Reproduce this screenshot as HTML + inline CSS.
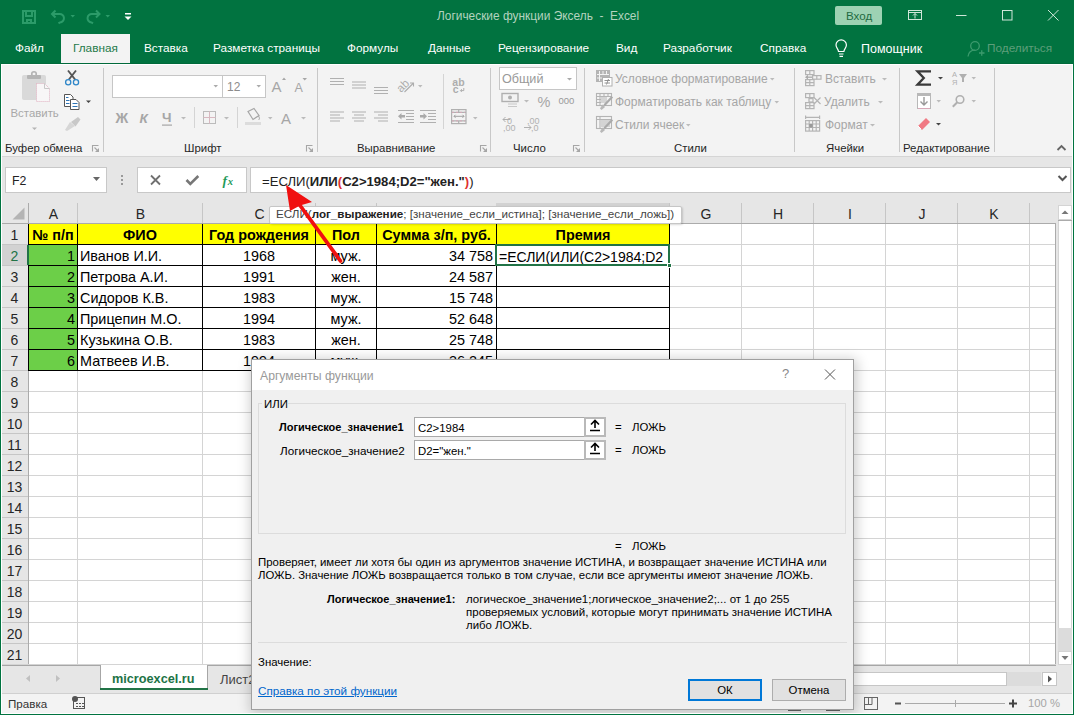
<!DOCTYPE html><html><head><meta charset="utf-8"><style>
*{margin:0;padding:0;box-sizing:border-box}
html,body{width:1074px;height:715px;overflow:hidden;background:#fff;font-family:"Liberation Sans",sans-serif}
.a{position:absolute}
.t{white-space:nowrap;line-height:1}
.tab{font-size:11.8px;color:#fff}
.grp{font-size:11.4px;color:#262626}
.sep{width:1px;background:#c8c8c8}
.dis{color:#a6a6a6}
.cell{font-size:14.4px;color:#000;line-height:1}
.hdr{font-size:14px;color:#262626}
.dlg{font-size:11.4px;color:#000}
svg{position:absolute;overflow:visible}
</style></head><body>
<div class="a " style="left:0px;top:0px;width:1074px;height:64px;background:#017340"></div>
<div class="a t " style="left:437px;top:11px;font-size:11.9px;color:#b3d3bf">Логические функции Эксель&nbsp; -&nbsp; Excel</div>
<div class="a " style="left:61px;top:34px;width:69px;height:31px;background:#f3f3f3"></div>
<div class="a t tab" style="left:15px;top:43px;">Файл</div>
<div class="a t tab" style="left:73px;top:43px;color:#1f7a4a">Главная</div>
<div class="a t tab" style="left:144px;top:43px;">Вставка</div>
<div class="a t tab" style="left:213px;top:43px;">Разметка страницы</div>
<div class="a t tab" style="left:347px;top:43px;">Формулы</div>
<div class="a t tab" style="left:428px;top:43px;">Данные</div>
<div class="a t tab" style="left:498px;top:43px;">Рецензирование</div>
<div class="a t tab" style="left:616px;top:43px;">Вид</div>
<div class="a t tab" style="left:663px;top:43px;">Разработчик</div>
<div class="a t tab" style="left:760px;top:43px;">Справка</div>
<div class="a t tab" style="left:861px;top:43px;font-size:12.5px">Помощник</div>
<div class="a t tab" style="left:987px;top:43px;color:#5d9e7a">Поделиться</div>
<svg style="left:0;top:0" width="1074" height="64">
<g fill="none" stroke="#2c9b69" stroke-width="2">
<rect x="23" y="11" width="12" height="12"/>
<path d="M26 11v5h6v-5"/><path d="M27 23v-3h4v3"/>
<path d="M55.5 10.5l-3.5 3.5 3.5 3.5"/><path d="M52.5 14h7a4.2 4.2 0 0 1 0.5 8.4l-1.5 1"/>
<path d="M96 10.5l3.5 3.5-3.5 3.5"/><path d="M99 14h-7a4.2 4.2 0 0 0 -0.5 8.4l1.5 1"/>
</g>
<polygon points="70.5,15 75,15 72.75,17.5" fill="#2c9b69"/>
<polygon points="105.5,15 110,15 107.75,17.5" fill="#2c9b69"/>
<rect x="125" y="13" width="6" height="1.5" fill="#fff"/><polygon points="124.5,16.5 131.5,16.5 128,20" fill="#fff"/>
<rect x="835" y="6" width="47" height="19" rx="2" fill="#9dd2b3"/>
<g fill="none" stroke="#cfe6d8" stroke-width="1">
<rect x="908.5" y="10.5" width="13" height="9"/><path d="M908.5 12.5h13"/><path d="M915 18.5v-5M913 15.5l2-2 2 2"/>
<path d="M956 15.5h10.5"/>
<rect x="1002.5" y="10.5" width="9.5" height="9.5"/>
<path d="M1048 10l10.5 10.5M1058.5 10l-10.5 10.5"/>
<path d="M841 53.5v-2.5a5.5 5.5 0 1 0 -0 0" stroke="none"/>
</g>
<g fill="none" stroke="#fff" stroke-width="1.2">
<path d="M838.5 51.5c0-2.5-2.5-3.5-2.5-6.5a5.2 5.2 0 0 1 10.4 0c0 3-2.5 4-2.5 6.5z"/>
<path d="M839 54h4.5M839.5 56.3h3.5"/>
</g>
<g fill="none" stroke="#3c9a6d" stroke-width="1.3">
<circle cx="975" cy="46" r="4.3"/><path d="M968 56.5c0.5-4 3.5-6.3 7-6.3"/><path d="M979 53h5.5M981.75 50.2v5.6"/>
</g>
</svg>
<div class="a t " style="left:846px;top:10px;font-size:11.6px;color:#1f6b42">Вход</div>
<div class="a " style="left:1px;top:64px;width:1072px;height:93px;background:#f3f3f3"></div>
<div class="a " style="left:1px;top:156px;width:1072px;height:1px;background:#d5d5d5"></div>
<div class="a sep" style="left:103px;top:68px;width:1px;height:84px;"></div>
<div class="a sep" style="left:317px;top:68px;width:1px;height:84px;"></div>
<div class="a sep" style="left:490px;top:68px;width:1px;height:84px;"></div>
<div class="a sep" style="left:584px;top:68px;width:1px;height:84px;"></div>
<div class="a sep" style="left:794px;top:68px;width:1px;height:84px;"></div>
<div class="a sep" style="left:899px;top:68px;width:1px;height:84px;"></div>
<div class="a sep" style="left:994px;top:68px;width:1px;height:84px;"></div>
<div class="a t grp" style="left:5px;top:143px;">Буфер обмена</div>
<div class="a t grp" style="left:184px;top:143px;">Шрифт</div>
<div class="a t grp" style="left:357px;top:143px;">Выравнивание</div>
<div class="a t grp" style="left:513px;top:143px;">Число</div>
<div class="a t grp" style="left:674px;top:143px;">Стили</div>
<div class="a t grp" style="left:826px;top:143px;">Ячейки</div>
<div class="a t grp" style="left:903px;top:143px;">Редактирование</div>
<svg style="left:0;top:0" width="1074" height="160" font-family="Liberation Sans">
<!-- paste -->
<rect x="22" y="75" width="24" height="25" rx="2" fill="#d9d9d9"/>
<rect x="27" y="75" width="14" height="4" rx="1" fill="#b4b4b4"/><circle cx="34" cy="74" r="2.3" fill="none" stroke="#b4b4b4" stroke-width="1.6"/>
<path d="M36.5 83.5h8l5 5v13h-13z" fill="#f8f6f7" stroke="#e0b0c0" stroke-width="1" stroke-dasharray="1 1"/>
<path d="M44.5 83.5v5h5" fill="none" stroke="#c8c8c8"/>
<text x="10.5" y="117" font-size="11.4" fill="#a8a8a8">Вставить</text>
<polygon points="32,127.5 37,127.5 34.5,130" fill="#b4b4b4"/>
<!-- scissors -->
<path d="M68 70.5l7.5 9.5M76 70.5l-7.5 9.5" stroke="#555" stroke-width="1.9"/>
<circle cx="68.2" cy="82.2" r="2.6" fill="#f3f3f3" stroke="#2e86c8" stroke-width="1.3"/>
<circle cx="76" cy="82.2" r="2.6" fill="#f3f3f3" stroke="#2e86c8" stroke-width="1.3"/>
<!-- copy -->
<path d="M64.5 94.5h6l2.5 2.5v9.5h-8.5z" fill="#fff" stroke="#555"/>
<path d="M70.5 99.5h5.5l3 3v7h-8.5z" fill="#fff" stroke="#555"/>
<path d="M66 97.5h2.5M66 100.5h3.5M66 103.5h3.5M72.5 103.5h5M72.5 106.5h5" stroke="#2e75b6"/>
<polygon points="86,100.5 91,100.5 88.5,103" fill="#444"/>
<!-- format painter -->
<path d="M71 122l7-5 2.5 2.5-5 7z" fill="#c8c8c8"/><path d="M65 130l5-8 5 4-8 5z" fill="#d6d6d6"/>
<!-- launchers -->
<g fill="none" stroke="#a6a6a6" stroke-width="1.1"><path d="M92.5 151.5v-6h6"/><path d="M94.5 147.5l3.5 3.5"/><path d="M306.5 151.5v-6h6"/><path d="M308.5 147.5l3.5 3.5"/><path d="M480.5 151.5v-6h6"/><path d="M482.5 147.5l3.5 3.5"/><path d="M573.5 151.5v-6h6"/><path d="M575.5 147.5l3.5 3.5"/></g>
<g fill="#a6a6a6"><polygon points="99,152 99,148 95,152"/><polygon points="313,152 313,148 309,152"/><polygon points="487,152 487,148 483,152"/><polygon points="580,152 580,148 576,152"/></g>
<!-- font boxes -->
<rect x="112.5" y="75.5" width="110" height="22" fill="#fff" stroke="#c6c6c6"/>
<rect x="222.5" y="75.5" width="43" height="22" fill="#fff" stroke="#c6c6c6"/>
<polygon points="213.5,85 218,85 215.75,87.5" fill="#aaa"/>
<polygon points="256.5,85 261,85 258.75,87.5" fill="#aaa"/>
<text x="227" y="90.5" font-size="12" fill="#8c8c8c">12</text>
<text x="271.5" y="92" font-size="15" fill="#a6a6a6">A</text><polygon points="282,80 286,80 284,77.5" fill="#a6a6a6"/>
<text x="294.5" y="92" font-size="12.5" fill="#a6a6a6">A</text><polygon points="302.5,78 307,78 304.75,80.5" fill="#a6a6a6"/>
<text x="115.5" y="122.5" font-size="14" font-weight="bold" fill="#a6a6a6">Ж</text>
<text x="139.5" y="122.5" font-size="13.5" font-weight="bold" font-style="italic" fill="#a6a6a6">К</text>
<text x="162" y="121.5" font-size="13.5" font-weight="bold" fill="#a6a6a6">Ч</text><rect x="162" y="124.5" width="10" height="1.2" fill="#a6a6a6"/>
<polygon points="181,117 186,117 183.5,119.5" fill="#bbb"/>
<rect x="194" y="107" width="1" height="21" fill="#d4d4d4"/>
<g fill="none" stroke="#bbb"><rect x="203.5" y="111.5" width="12" height="12"/><path d="M209.5 111.5v12M203.5 117.5h12" stroke="#d8b8c0"/></g>
<polygon points="224,117 229,117 226.5,119.5" fill="#bbb"/>
<rect x="237" y="107" width="1" height="21" fill="#d4d4d4"/>
<path d="M248 111.5l6-3 5 7-6 4z" fill="none" stroke="#a6a6a6" stroke-width="1.2"/><path d="M258.5 116c1 1.5 1.5 3 0 4" fill="none" stroke="#a6a6a6"/>
<rect x="245" y="122" width="16" height="3" fill="#dcdcdc"/>
<polygon points="268,117 272.5,117 270.25,119.5" fill="#bbb"/>
<text x="281" y="124" font-size="15" fill="#a6a6a6">A</text>
<polygon points="301,117 306,117 303.5,119.5" fill="#bbb"/>
<!-- alignment -->
<g stroke="#b0b0b0" stroke-width="1.2">
<path d="M330 78.5h14M330 81.5h14M330 84.5h14"/>
<path d="M352 82h14M352 85h14M352 88h14"/>
<path d="M374 87.5h14M374 90.5h14M374 93.5h14"/>
<path d="M330 112h14M330 115h10M330 118h14M330 121h10"/>
<path d="M352 112h14M354 115h10M352 118h14M354 121h10"/>
<path d="M374 112h14M378 115h10M374 118h14M378 121h10"/>
<path d="M398 110.5h16M406 113.5h8M406 116.5h8M406 119.5h8M398 122.5h16"/>
<path d="M420 110.5h16M428 113.5h8M428 116.5h8M428 119.5h8M420 122.5h16"/>
</g>
<polygon points="398,116.3 401.5,113 401.5,115 405,115 405,117.6 401.5,117.6 401.5,119.6" fill="#aaa"/>
<polygon points="427,116.3 423.5,113 423.5,115 420,115 420,117.6 423.5,117.6 423.5,119.6" fill="#aaa"/>
<text x="0" y="0" font-size="11.5" fill="#adadad" transform="translate(401 93) rotate(-45)">ab</text>
<path d="M404.5 92l9-9M410 83h3.5v3.5" stroke="#adadad" fill="none" stroke-width="1.1"/>
<polygon points="418,85 422.5,85 420.25,87.5" fill="#bbb"/>
<rect x="443" y="74" width="1" height="55" fill="#d4d4d4"/>
<text x="452.3" y="86" font-size="10.5" font-weight="bold" fill="#adadad">ab</text><text x="452.8" y="93" font-size="10.5" font-weight="bold" fill="#adadad">c</text>
<path d="M463.8 88v2.6h-3M461.8 89.2l-1.4 1.4 1.4 1.4" stroke="#adadad" fill="none"/>
<g fill="none" stroke="#b0b0b0" stroke-width="1.2"><rect x="451.6" y="109.6" width="14.4" height="14"/><path d="M451.6 112.3h14.4M451.6 120.9h14.4M458.7 109.6v2.7M458.7 120.9v2.7"/></g>
<path d="M454 116.3h10M455.5 114.8l-1.5 1.5 1.5 1.5M462.5 114.8l1.5 1.5-1.5 1.5" stroke="#a0a0a0" fill="none"/>
<path d="M452 112.3h13M452 120.9h13" stroke="#d8a8b8" stroke-dasharray="2 2"/>
<polygon points="473,117 477.5,117 475.25,119.5" fill="#bbb"/>
<!-- number -->
<rect x="499.5" y="67.5" width="77" height="22" fill="#fff" stroke="#c6c6c6"/>
<text x="502" y="82.5" font-size="12.6" fill="#999">Общий</text>
<polygon points="567,78 572,78 569.5,80.5" fill="#aaa"/>
<rect x="502" y="93.5" width="16" height="8" fill="none" stroke="#b0b0b0" stroke-width="1.4"/><circle cx="510" cy="97.5" r="2" fill="#b0b0b0"/>
<path d="M508 104h9M508 106.5h9" stroke="#c8c8c8" stroke-width="1.2"/>
<polygon points="524,100 529,100 526.5,102.5" fill="#bbb"/>
<text x="537.5" y="106.5" font-size="14.5" fill="#a6a6a6">%</text>
<text x="558.5" y="103.5" font-size="9.5" fill="#999">000</text>
<text x="507" y="123.5" font-size="9" fill="#b0b0b0">0</text><text x="503" y="131" font-size="9" fill="#b0b0b0">,00</text>
<path d="M510 119.5h-7M505.5 117l-2.5 2.5 2.5 2.5" stroke="#b0b0b0" fill="none"/>
<text x="527" y="123.5" font-size="9" fill="#b0b0b0">,00</text><text x="531" y="131" font-size="9" fill="#b0b0b0">,0</text>
<path d="M524 127.5h7M528.5 125l2.5 2.5-2.5 2.5" stroke="#b0b0b0" fill="none"/>
<!-- styles -->
<rect x="596" y="70" width="14" height="12" fill="#b4b4b4"/>
<path d="M599.5 71v10M603 71v3M606.5 71v3M597 74.5h12M597 78h5" stroke="#f3f3f3" stroke-width="1"/>
<rect x="602.5" y="77.5" width="9.5" height="8.5" fill="#fff" stroke="#b0b0b0"/>
<path d="M604.5 80.5h5.5M604.5 83h5.5M608.5 79l-2 5.5" stroke="#888" stroke-width="0.9"/>
<g fill="none" stroke="#b4b4b4" stroke-width="1.1">
<rect x="596.5" y="93.5" width="15" height="12"/><path d="M596.5 96.5h15M596.5 99.5h8M596.5 102.5h6M600 93.5v12M604 93.5v6M608 93.5v3"/>
<rect x="596.5" y="116.5" width="15" height="12"/><path d="M596.5 119.5h15M600 116.5v12"/>
</g>
<rect x="601" y="97" width="6" height="6" fill="#d4d4d4"/>
<rect x="601" y="120" width="9" height="7" fill="#d4d4d4"/>
<path d="M603.5 104.5l8-8.5 1.6 1.6-8 8.5z" fill="#aaa"/><path d="M600 108.5l2.5-4 2.6 2.4-3.6 3z" fill="#b8b8b8"/>
<path d="M603.5 127.5l8-8.5 1.6 1.6-8 8.5z" fill="#aaa"/><path d="M600 131.5l2.5-4 2.6 2.4-3.6 3z" fill="#b8b8b8"/>
<text x="615" y="83" font-size="12" fill="#a6a6a6">Условное форматирование</text>
<text x="615" y="105.5" font-size="12" fill="#a6a6a6">Форматировать как таблицу</text>
<text x="615" y="129" font-size="12" fill="#a6a6a6">Стили ячеек</text>
<polygon points="770,78 774.5,78 772.25,80.5" fill="#bbb"/>
<polygon points="774.5,101 779,101 776.75,103.5" fill="#bbb"/>
<polygon points="686,124 690.5,124 688.25,126.5" fill="#bbb"/>
<!-- cells -->
<g fill="none" stroke="#b4b4b4" stroke-width="1.2">
<rect x="805.6" y="70.6" width="8.4" height="4"/><path d="M809.8 70.6v4"/>
<rect x="805.6" y="79.6" width="8.4" height="6"/><path d="M805.6 82.6h8.4M809.8 79.6v6"/>
<rect x="812.6" y="75.6" width="8.4" height="3.6"/><path d="M816.8 75.6v3.6"/>
<rect x="805.6" y="93.6" width="8.4" height="4"/><path d="M809.8 93.6v4"/>
<rect x="805.6" y="102.6" width="8.4" height="6"/><path d="M805.6 105.6h8.4M809.8 102.6v6"/>
<rect x="809" y="98.6" width="4" height="3.4"/>
<path d="M814 97.5l6.5 6.5M820.5 97.5l-6.5 6.5"/>
<rect x="805.6" y="120.6" width="14" height="10.5"/><path d="M805.6 124h14M805.6 127.5h14M809.2 120.6v10.5M812.6 120.6v10.5M816.2 120.6v10.5"/>
<path d="M806 117.3h13M805.6 115.6v3.5M819.6 115.6v3.5"/>
</g>
<polygon points="805,77.2 808,74.8 808,79.6" fill="#aaa"/><path d="M807 77.2h5" stroke="#aaa" stroke-width="1.3"/>
<rect x="809.2" y="124" width="3.4" height="3.5" fill="#999"/>
<text x="825" y="82.8" font-size="12" fill="#a6a6a6">Вставить</text>
<text x="824" y="105.8" font-size="12" fill="#a6a6a6">Удалить</text>
<text x="825" y="128.8" font-size="12" fill="#a6a6a6">Формат</text>
<polygon points="882,78 887,78 884.5,80.5" fill="#bbb"/>
<polygon points="878,101 883,101 880.5,103.5" fill="#bbb"/>
<polygon points="870,124 875,124 872.5,126.5" fill="#bbb"/>
<!-- editing -->
<path d="M931 71.3h-13.5l6.3 6.7-6.3 6.7h13.5" fill="none" stroke="#3a3a3a" stroke-width="2.3"/>
<polygon points="938,77 943,77 940.5,79.5" fill="#444"/>
<text x="952" y="77" font-size="7.5" fill="#b0b0b0">A</text><text x="952" y="85" font-size="7.5" fill="#b0b0b0">Я</text>
<path d="M959 74h8l-3 4v4h-2v-4z" fill="#b0b0b0"/>
<polygon points="971.5,77 976,77 973.75,79.5" fill="#bbb"/>
<rect x="917.5" y="93.5" width="13" height="15" fill="#fff" stroke="#b8b8b8"/><rect x="917.5" y="93.5" width="13" height="2.5" fill="#b8b8b8"/>
<path d="M924 97v8M920.5 101.5l3.5 3.5 3.5-3.5" fill="none" stroke="#999" stroke-width="1.4"/>
<path d="M918 108.5h12" stroke="#d8a8b8"/>
<polygon points="936.5,100 941,100 938.75,102.5" fill="#bbb"/>
<circle cx="960" cy="99.5" r="3.8" fill="none" stroke="#b0b0b0" stroke-width="1.6"/><path d="M957.3 102.2l-4.5 4.5" stroke="#b0b0b0" stroke-width="2"/>
<polygon points="971.5,100 976,100 973.75,102.5" fill="#bbb"/>
<path d="M918 126l8-8 4 4-8 8z" fill="#f07a84"/><path d="M918 126l3 3" stroke="#fff"/>
<polygon points="936,123 941,123 938.5,125.5" fill="#444"/>
<path d="M1057.5 150l4-4 4 4" fill="none" stroke="#666" stroke-width="1.8"/>
</svg>
<div class="a " style="left:1px;top:157px;width:1072px;height:46px;background:#e6e6e6"></div>
<div class="a " style="left:5px;top:167px;width:102px;height:26px;background:#fff;border:1px solid #c8c8c8"></div>
<div class="a t " style="left:12px;top:175px;font-size:12.3px;color:#222">F2</div>
<div class="a " style="left:137px;top:167px;width:110px;height:26px;background:#fff;border:1px solid #c8c8c8"></div>
<div class="a " style="left:250px;top:167px;width:821px;height:26px;background:#fff;border:1px solid #c8c8c8"></div>
<svg style="left:0;top:0" width="1074" height="715"><polygon points="93,177 100,177 96.5,181" fill="#666"/><g fill="#999"><rect x="121" y="175" width="2" height="2"/><rect x="121" y="179" width="2" height="2"/><rect x="121" y="183" width="2" height="2"/></g></svg>
<svg style="left:0;top:0" width="1074" height="715"><path d="M151 175.5l9 9M160 175.5l-9 9" stroke="#707070" stroke-width="1.8"/><path d="M186.5 180l3.8 4 8-8" stroke="#777" stroke-width="2.6" fill="none"/><text x="222.5" y="185" font-family="Liberation Serif" font-style="italic" font-weight="bold" font-size="13.5" fill="#1f9a5a">f</text><text x="227.8" y="185" font-family="Liberation Serif" font-style="italic" font-weight="bold" font-size="10.5" fill="#1f9a5a">x</text></svg>
<div class="a t " style="left:262px;top:175px;font-size:13.1px;color:#222">=ЕСЛИ(<b>ИЛИ<span style="color:#e03030">(</span>C2&gt;1984;D2="жен."<span style="color:#e03030">)</span></b>)</div>
<div class="a " style="left:1058px;top:175px;width:9px;height:6px;"></div>
<svg style="left:0;top:0" width="1074" height="715"><path d="M1058.5 176l4 4 4-4" stroke="#555" stroke-width="2" fill="none"/></svg>
<div class="a " style="left:1px;top:203px;width:1057px;height:20px;background:#e6e6e6"></div>
<div class="a " style="left:1px;top:223px;width:27px;height:441px;background:#e6e6e6"></div>
<div class="a " style="left:29px;top:224px;width:1026px;height:440px;background:#fff"></div>
<svg style="left:0;top:0" width="1074" height="715"><polygon points="12.5,219.5 24.5,207.5 24.5,219.5" fill="#b4b4b4"/></svg>
<div class="a " style="left:77px;top:203px;width:1px;height:20px;background:#c6c6c6"></div>
<div class="a " style="left:202px;top:203px;width:1px;height:20px;background:#c6c6c6"></div>
<div class="a " style="left:315px;top:203px;width:1px;height:20px;background:#c6c6c6"></div>
<div class="a " style="left:376px;top:203px;width:1px;height:20px;background:#c6c6c6"></div>
<div class="a " style="left:496px;top:203px;width:1px;height:20px;background:#c6c6c6"></div>
<div class="a " style="left:669px;top:203px;width:1px;height:20px;background:#c6c6c6"></div>
<div class="a " style="left:741px;top:203px;width:1px;height:20px;background:#c6c6c6"></div>
<div class="a " style="left:813px;top:203px;width:1px;height:20px;background:#c6c6c6"></div>
<div class="a " style="left:885px;top:203px;width:1px;height:20px;background:#c6c6c6"></div>
<div class="a " style="left:957px;top:203px;width:1px;height:20px;background:#c6c6c6"></div>
<div class="a " style="left:1029px;top:203px;width:1px;height:20px;background:#c6c6c6"></div>
<div class="a " style="left:28px;top:203px;width:1px;height:20px;background:#ababab"></div>
<div class="a " style="left:496px;top:203px;width:173px;height:20px;background:#d2d2d2"></div>
<div class="a " style="left:496px;top:221px;width:173px;height:2px;background:#217346"></div>
<div class="a " style="left:669px;top:203px;width:1px;height:20px;background:#c6c6c6"></div>
<div class="a " style="left:1px;top:223px;width:1054px;height:1px;background:#ababab"></div>
<div class="a t hdr" style="left:29px;top:207px;width:49px;text-align:center">A</div>
<div class="a t hdr" style="left:78px;top:207px;width:125px;text-align:center">B</div>
<div class="a t hdr" style="left:203px;top:207px;width:113px;text-align:center">C</div>
<div class="a t hdr" style="left:316px;top:207px;width:61px;text-align:center">D</div>
<div class="a t hdr" style="left:377px;top:207px;width:120px;text-align:center">E</div>
<div class="a t hdr" style="left:497px;top:207px;width:173px;text-align:center">F</div>
<div class="a t hdr" style="left:670px;top:207px;width:72px;text-align:center">G</div>
<div class="a t hdr" style="left:742px;top:207px;width:72px;text-align:center">H</div>
<div class="a t hdr" style="left:814px;top:207px;width:72px;text-align:center">I</div>
<div class="a t hdr" style="left:886px;top:207px;width:72px;text-align:center">J</div>
<div class="a t hdr" style="left:958px;top:207px;width:72px;text-align:center">K</div>
<div class="a " style="left:1px;top:244px;width:28px;height:1px;background:#c6c6c6"></div>
<div class="a " style="left:29px;top:244px;width:1026px;height:1px;background:#d4d4d4"></div>
<div class="a " style="left:1px;top:265px;width:28px;height:1px;background:#c6c6c6"></div>
<div class="a " style="left:29px;top:265px;width:1026px;height:1px;background:#d4d4d4"></div>
<div class="a " style="left:1px;top:286px;width:28px;height:1px;background:#c6c6c6"></div>
<div class="a " style="left:29px;top:286px;width:1026px;height:1px;background:#d4d4d4"></div>
<div class="a " style="left:1px;top:307px;width:28px;height:1px;background:#c6c6c6"></div>
<div class="a " style="left:29px;top:307px;width:1026px;height:1px;background:#d4d4d4"></div>
<div class="a " style="left:1px;top:328px;width:28px;height:1px;background:#c6c6c6"></div>
<div class="a " style="left:29px;top:328px;width:1026px;height:1px;background:#d4d4d4"></div>
<div class="a " style="left:1px;top:349px;width:28px;height:1px;background:#c6c6c6"></div>
<div class="a " style="left:29px;top:349px;width:1026px;height:1px;background:#d4d4d4"></div>
<div class="a " style="left:1px;top:370px;width:28px;height:1px;background:#c6c6c6"></div>
<div class="a " style="left:29px;top:370px;width:1026px;height:1px;background:#d4d4d4"></div>
<div class="a " style="left:1px;top:391px;width:28px;height:1px;background:#c6c6c6"></div>
<div class="a " style="left:29px;top:391px;width:1026px;height:1px;background:#d4d4d4"></div>
<div class="a " style="left:1px;top:412px;width:28px;height:1px;background:#c6c6c6"></div>
<div class="a " style="left:29px;top:412px;width:1026px;height:1px;background:#d4d4d4"></div>
<div class="a " style="left:1px;top:433px;width:28px;height:1px;background:#c6c6c6"></div>
<div class="a " style="left:29px;top:433px;width:1026px;height:1px;background:#d4d4d4"></div>
<div class="a " style="left:1px;top:454px;width:28px;height:1px;background:#c6c6c6"></div>
<div class="a " style="left:29px;top:454px;width:1026px;height:1px;background:#d4d4d4"></div>
<div class="a " style="left:1px;top:475px;width:28px;height:1px;background:#c6c6c6"></div>
<div class="a " style="left:29px;top:475px;width:1026px;height:1px;background:#d4d4d4"></div>
<div class="a " style="left:1px;top:496px;width:28px;height:1px;background:#c6c6c6"></div>
<div class="a " style="left:29px;top:496px;width:1026px;height:1px;background:#d4d4d4"></div>
<div class="a " style="left:1px;top:517px;width:28px;height:1px;background:#c6c6c6"></div>
<div class="a " style="left:29px;top:517px;width:1026px;height:1px;background:#d4d4d4"></div>
<div class="a " style="left:1px;top:538px;width:28px;height:1px;background:#c6c6c6"></div>
<div class="a " style="left:29px;top:538px;width:1026px;height:1px;background:#d4d4d4"></div>
<div class="a " style="left:1px;top:559px;width:28px;height:1px;background:#c6c6c6"></div>
<div class="a " style="left:29px;top:559px;width:1026px;height:1px;background:#d4d4d4"></div>
<div class="a " style="left:1px;top:580px;width:28px;height:1px;background:#c6c6c6"></div>
<div class="a " style="left:29px;top:580px;width:1026px;height:1px;background:#d4d4d4"></div>
<div class="a " style="left:1px;top:601px;width:28px;height:1px;background:#c6c6c6"></div>
<div class="a " style="left:29px;top:601px;width:1026px;height:1px;background:#d4d4d4"></div>
<div class="a " style="left:1px;top:622px;width:28px;height:1px;background:#c6c6c6"></div>
<div class="a " style="left:29px;top:622px;width:1026px;height:1px;background:#d4d4d4"></div>
<div class="a " style="left:1px;top:643px;width:28px;height:1px;background:#c6c6c6"></div>
<div class="a " style="left:29px;top:643px;width:1026px;height:1px;background:#d4d4d4"></div>
<div class="a " style="left:1px;top:664px;width:28px;height:1px;background:#c6c6c6"></div>
<div class="a " style="left:29px;top:664px;width:1026px;height:1px;background:#d4d4d4"></div>
<div class="a " style="left:77px;top:224px;width:1px;height:440px;background:#d4d4d4"></div>
<div class="a " style="left:202px;top:224px;width:1px;height:440px;background:#d4d4d4"></div>
<div class="a " style="left:315px;top:224px;width:1px;height:440px;background:#d4d4d4"></div>
<div class="a " style="left:376px;top:224px;width:1px;height:440px;background:#d4d4d4"></div>
<div class="a " style="left:496px;top:224px;width:1px;height:440px;background:#d4d4d4"></div>
<div class="a " style="left:669px;top:224px;width:1px;height:440px;background:#d4d4d4"></div>
<div class="a " style="left:741px;top:224px;width:1px;height:440px;background:#d4d4d4"></div>
<div class="a " style="left:813px;top:224px;width:1px;height:440px;background:#d4d4d4"></div>
<div class="a " style="left:885px;top:224px;width:1px;height:440px;background:#d4d4d4"></div>
<div class="a " style="left:957px;top:224px;width:1px;height:440px;background:#d4d4d4"></div>
<div class="a " style="left:1029px;top:224px;width:1px;height:440px;background:#d4d4d4"></div>
<div class="a " style="left:28px;top:224px;width:1px;height:440px;background:#ababab"></div>
<div class="a " style="left:1055px;top:223px;width:1px;height:442px;background:#ababab"></div>
<div class="a " style="left:1px;top:245px;width:27px;height:20px;background:#d2d2d2"></div>
<div class="a t hdr" style="left:1px;top:228px;width:27px;text-align:center">1</div>
<div class="a t hdr" style="left:1px;top:249px;width:27px;text-align:center;color:#217346">2</div>
<div class="a t hdr" style="left:1px;top:270px;width:27px;text-align:center">3</div>
<div class="a t hdr" style="left:1px;top:291px;width:27px;text-align:center">4</div>
<div class="a t hdr" style="left:1px;top:312px;width:27px;text-align:center">5</div>
<div class="a t hdr" style="left:1px;top:333px;width:27px;text-align:center">6</div>
<div class="a t hdr" style="left:1px;top:354px;width:27px;text-align:center">7</div>
<div class="a t hdr" style="left:1px;top:375px;width:27px;text-align:center">8</div>
<div class="a t hdr" style="left:1px;top:396px;width:27px;text-align:center">9</div>
<div class="a t hdr" style="left:1px;top:417px;width:27px;text-align:center">10</div>
<div class="a t hdr" style="left:1px;top:438px;width:27px;text-align:center">11</div>
<div class="a t hdr" style="left:1px;top:459px;width:27px;text-align:center">12</div>
<div class="a t hdr" style="left:1px;top:480px;width:27px;text-align:center">13</div>
<div class="a t hdr" style="left:1px;top:501px;width:27px;text-align:center">14</div>
<div class="a t hdr" style="left:1px;top:522px;width:27px;text-align:center">15</div>
<div class="a t hdr" style="left:1px;top:543px;width:27px;text-align:center">16</div>
<div class="a t hdr" style="left:1px;top:564px;width:27px;text-align:center">17</div>
<div class="a t hdr" style="left:1px;top:585px;width:27px;text-align:center">18</div>
<div class="a t hdr" style="left:1px;top:606px;width:27px;text-align:center">19</div>
<div class="a t hdr" style="left:1px;top:627px;width:27px;text-align:center">20</div>
<div class="a t hdr" style="left:1px;top:648px;width:27px;text-align:center">21</div>
<div class="a " style="left:1px;top:664px;width:1055px;height:1px;background:#d4d4d4"></div>
<div class="a " style="left:29px;top:224px;width:640px;height:20px;background:#ffff00"></div>
<div class="a " style="left:29px;top:245px;width:48px;height:125px;background:#6ccf48"></div>
<div class="a t cell" style="left:29px;top:228px;width:48px;text-align:center;font-weight:bold">№ п/п</div>
<div class="a t cell" style="left:78px;top:228px;width:124px;text-align:center;font-weight:bold">ФИО</div>
<div class="a t cell" style="left:203px;top:228px;width:112px;text-align:center;font-weight:bold">Год рождения</div>
<div class="a t cell" style="left:316px;top:228px;width:60px;text-align:center;font-weight:bold">Пол</div>
<div class="a t cell" style="left:377px;top:228px;width:119px;text-align:center;font-weight:bold">Сумма з/п, руб.</div>
<div class="a t cell" style="left:497px;top:228px;width:172px;text-align:center;font-weight:bold">Премия</div>
<div class="a t cell" style="left:29px;top:249px;width:46px;text-align:right">1</div>
<div class="a t cell" style="left:80px;top:249px">Иванов И.И.</div>
<div class="a t cell" style="left:203px;top:249px;width:112px;text-align:center">1968</div>
<div class="a t cell" style="left:316px;top:249px;width:60px;text-align:center">муж.</div>
<div class="a t cell" style="left:377px;top:249px;width:116px;text-align:right">34 758</div>
<div class="a t cell" style="left:29px;top:270px;width:46px;text-align:right">2</div>
<div class="a t cell" style="left:80px;top:270px">Петрова А.И.</div>
<div class="a t cell" style="left:203px;top:270px;width:112px;text-align:center">1991</div>
<div class="a t cell" style="left:316px;top:270px;width:60px;text-align:center">жен.</div>
<div class="a t cell" style="left:377px;top:270px;width:116px;text-align:right">24 587</div>
<div class="a t cell" style="left:29px;top:291px;width:46px;text-align:right">3</div>
<div class="a t cell" style="left:80px;top:291px">Сидоров К.В.</div>
<div class="a t cell" style="left:203px;top:291px;width:112px;text-align:center">1983</div>
<div class="a t cell" style="left:316px;top:291px;width:60px;text-align:center">муж.</div>
<div class="a t cell" style="left:377px;top:291px;width:116px;text-align:right">15 748</div>
<div class="a t cell" style="left:29px;top:312px;width:46px;text-align:right">4</div>
<div class="a t cell" style="left:80px;top:312px">Прицепин М.О.</div>
<div class="a t cell" style="left:203px;top:312px;width:112px;text-align:center">1994</div>
<div class="a t cell" style="left:316px;top:312px;width:60px;text-align:center">муж.</div>
<div class="a t cell" style="left:377px;top:312px;width:116px;text-align:right">52 648</div>
<div class="a t cell" style="left:29px;top:333px;width:46px;text-align:right">5</div>
<div class="a t cell" style="left:80px;top:333px">Кузькина О.В.</div>
<div class="a t cell" style="left:203px;top:333px;width:112px;text-align:center">1983</div>
<div class="a t cell" style="left:316px;top:333px;width:60px;text-align:center">жен.</div>
<div class="a t cell" style="left:377px;top:333px;width:116px;text-align:right">25 748</div>
<div class="a t cell" style="left:29px;top:354px;width:46px;text-align:right">6</div>
<div class="a t cell" style="left:80px;top:354px">Матвеев И.В.</div>
<div class="a t cell" style="left:203px;top:354px;width:112px;text-align:center">1994</div>
<div class="a t cell" style="left:316px;top:354px;width:60px;text-align:center">муж.</div>
<div class="a t cell" style="left:377px;top:354px;width:116px;text-align:right">36 245</div>
<div class="a " style="left:28px;top:244px;width:642px;height:1px;background:#000"></div>
<div class="a " style="left:28px;top:265px;width:642px;height:1px;background:#000"></div>
<div class="a " style="left:28px;top:286px;width:642px;height:1px;background:#000"></div>
<div class="a " style="left:28px;top:307px;width:642px;height:1px;background:#000"></div>
<div class="a " style="left:28px;top:328px;width:642px;height:1px;background:#000"></div>
<div class="a " style="left:28px;top:349px;width:642px;height:1px;background:#000"></div>
<div class="a " style="left:28px;top:370px;width:642px;height:1px;background:#000"></div>
<div class="a " style="left:28px;top:224px;width:1px;height:147px;background:#000"></div>
<div class="a " style="left:77px;top:224px;width:1px;height:147px;background:#000"></div>
<div class="a " style="left:202px;top:224px;width:1px;height:147px;background:#000"></div>
<div class="a " style="left:315px;top:224px;width:1px;height:147px;background:#000"></div>
<div class="a " style="left:376px;top:224px;width:1px;height:147px;background:#000"></div>
<div class="a " style="left:496px;top:224px;width:1px;height:147px;background:#000"></div>
<div class="a " style="left:669px;top:224px;width:1px;height:147px;background:#000"></div>
<div class="a " style="left:27px;top:245px;width:2px;height:20px;background:#217346"></div>
<div class="a t cell" style="left:499px;top:250px;font-size:14px">=ЕСЛИ(ИЛИ(C2&gt;1984;D2</div>
<div class="a " style="left:495px;top:244px;width:175px;height:22px;border:2px solid #217346"></div>
<div class="a " style="left:667px;top:263px;width:5px;height:5px;background:#217346;border:1px solid #fff"></div>
<div class="a " style="left:269px;top:206px;width:413px;height:18px;background:#fff;border:1px solid #c6c6c6;border-radius:2px;box-shadow:1px 1px 2px rgba(0,0,0,0.15)"></div>
<div class="a t " style="left:276px;top:208px;font-size:11.65px;color:#444">ЕСЛИ(<b style="color:#222">лог_выражение</b>; [значение_если_истина]; [значение_если_ложь])</div>
<svg style="left:0;top:0" width="1074" height="715"><path d="M340.5 261L299 204" stroke="#f01010" stroke-width="3.8" stroke-linecap="round"/><polygon points="286,185 312,202 300,205.5 290,211" fill="#f01010"/></svg>
<div class="a " style="left:1056px;top:203px;width:17px;height:462px;background:#e6e6e6"></div>
<div class="a " style="left:1058px;top:205px;width:14px;height:15px;background:#fff;border:1px solid #d4d4d4"></div>
<svg style="left:0;top:0" width="1074" height="715"><polygon points="1061.5,214 1065,210.5 1068.5,214" fill="#777"/></svg>
<div class="a " style="left:1058px;top:220px;width:14px;height:1px;background:#ababab"></div>
<div class="a " style="left:1058px;top:221px;width:14px;height:407px;background:#fff;border-left:1px solid #d4d4d4;border-right:1px solid #d4d4d4"></div>
<div class="a " style="left:1058px;top:628px;width:14px;height:23px;background:#dcdcdc"></div>
<div class="a " style="left:1058px;top:651px;width:14px;height:14px;background:#fff;border:1px solid #d4d4d4"></div>
<svg style="left:0;top:0" width="1074" height="715"><polygon points="1061.5,656 1068.5,656 1065,660" fill="#777"/></svg>
<div class="a " style="left:1px;top:665px;width:1072px;height:28px;background:#e6e6e6"></div>
<div class="a " style="left:1px;top:665px;width:1055px;height:1px;background:#a6a6a6"></div>
<svg style="left:0;top:0" width="1074" height="715"><polygon points="30,675 26,678.5 30,682" fill="#c0c0c0"/><polygon points="56,675 60,678.5 56,682" fill="#c0c0c0"/></svg>
<div class="a " style="left:100px;top:665px;width:108px;height:25px;background:#fff;border-left:1px solid #a6a6a6;border-right:1px solid #a6a6a6"></div>
<div class="a " style="left:100px;top:688px;width:108px;height:2px;background:#217346"></div>
<div class="a t " style="left:112px;top:673px;font-size:12.7px;font-weight:bold;color:#217346">microexcel.ru</div>
<div class="a t " style="left:220px;top:673px;font-size:13px;color:#444">Лист2</div>
<div class="a " style="left:300px;top:672px;width:707px;height:14px;background:#fff;border:1px solid #c6c6c6"></div>
<div class="a " style="left:1007px;top:672px;width:34px;height:14px;background:#dcdcdc"></div>
<div class="a " style="left:1042px;top:672px;width:15px;height:14px;background:#fff;border:1px solid #c6c6c6"></div>
<svg style="left:0;top:0" width="1074" height="715"><polygon points="1048,675.5 1052,679 1048,682.5" fill="#555"/></svg>
<div class="a " style="left:1px;top:693px;width:1072px;height:20px;background:#f3f3f3;border-top:1px solid #d0d0d0"></div>
<div class="a t " style="left:8px;top:698px;font-size:11.6px;color:#333">Правка</div>
<svg style="left:0;top:0" width="1074" height="715"><g fill="none" stroke="#555" stroke-width="1"><rect x="73.5" y="697.5" width="11" height="11"/></g><circle cx="75" cy="699" r="3" fill="#555"/><g fill="#555"><rect x="76" y="703" width="2" height="1"/><rect x="79" y="703" width="2" height="1"/><rect x="82" y="703" width="2" height="1"/><rect x="76" y="706" width="2" height="1"/><rect x="79" y="706" width="2" height="1"/><rect x="82" y="706" width="2" height="1"/></g></svg>
<svg style="left:0;top:0" width="1074" height="715"><g fill="none" stroke="#666" stroke-width="1"><rect x="864.5" y="697.5" width="13" height="12"/><path d="M864.5 704.5h7.5v-7M868.5 697.5v7"/></g><rect x="788" y="710" width="13" height="1" fill="#666"/><rect x="826" y="710" width="14" height="1" fill="#666"/><rect x="895" y="702.5" width="6" height="2" fill="#555"/><rect x="905" y="703" width="100" height="1" fill="#aaa"/><rect x="955" y="700" width="1" height="7" fill="#aaa"/><path d="M1009 703.5h8M1013 699.5v8" stroke="#444" stroke-width="2"/></svg>
<div class="a t " style="left:1028px;top:698px;font-size:11.3px;color:#a6a6a6">100 %</div>
<div class="a " style="left:251px;top:359px;width:603px;height:351px;background:#f0f0f0;border:1px solid #a0a0a0;box-shadow:1px 2px 12px 2px rgba(0,0,0,0.2)"></div>
<div class="a " style="left:252px;top:360px;width:601px;height:30px;background:#fff"></div>
<div class="a t " style="left:260px;top:370px;font-size:12.2px;color:#999">Аргументы функции</div>
<div class="a t " style="left:782px;top:367px;font-size:13px;color:#888">?</div>
<svg style="left:0;top:0" width="1074" height="715"><path d="M825 369.5l10 10M835 369.5l-10 10" stroke="#555" stroke-width="1"/></svg>
<div class="a " style="left:258px;top:403px;width:588px;height:131px;border:1px solid #dcdcdc"></div>
<div class="a " style="left:262px;top:397px;width:26px;height:12px;background:#f0f0f0"></div>
<div class="a t dlg" style="left:264px;top:399px;">ИЛИ</div>
<div class="a t dlg" style="left:279px;top:422px;font-weight:bold;font-size:11px">Логическое_значение1</div>
<div class="a t dlg" style="left:280px;top:445px;font-size:11.7px">Логическое_значение2</div>
<div class="a " style="left:414px;top:417px;width:192px;height:20px;background:#fff;border:1px solid #a9a9a9"></div>
<div class="a " style="left:584px;top:417px;width:22px;height:20px;background:#fff;border:2px solid #b9b9b9"></div>
<svg style="left:0;top:0" width="1074" height="715"><path d="M591 424.5l4-4 4 4M595 421v7M590 430.5h10" stroke="#000" stroke-width="1.6" fill="none"/></svg>
<div class="a " style="left:414px;top:440px;width:192px;height:20px;background:#fff;border:1px solid #a9a9a9"></div>
<div class="a " style="left:584px;top:440px;width:22px;height:20px;background:#fff;border:2px solid #b9b9b9"></div>
<svg style="left:0;top:0" width="1074" height="715"><path d="M591 447.5l4-4 4 4M595 444v7M590 453.5h10" stroke="#000" stroke-width="1.6" fill="none"/></svg>
<div class="a t dlg" style="left:418px;top:423px;">C2&gt;1984</div>
<div class="a t dlg" style="left:418px;top:446px;">D2="жен."</div>
<div class="a t dlg" style="left:615px;top:422px;">=</div>
<div class="a t dlg" style="left:632px;top:422px;">ЛОЖЬ</div>
<div class="a t dlg" style="left:615px;top:445px;">=</div>
<div class="a t dlg" style="left:632px;top:445px;">ЛОЖЬ</div>
<div class="a t dlg" style="left:615px;top:541px;">=</div>
<div class="a t dlg" style="left:632px;top:541px;">ЛОЖЬ</div>
<div class="a t dlg" style="left:258px;top:557px;font-size:11.45px">Проверяет, имеет ли хотя бы один из аргументов значение ИСТИНА, и возвращает значение ИСТИНА или</div>
<div class="a t dlg" style="left:258px;top:570px;font-size:11.35px">ЛОЖЬ. Значение ЛОЖЬ возвращается только в том случае, если все аргументы имеют значение ЛОЖЬ.</div>
<div class="a t dlg" style="left:327px;top:594px;font-weight:bold;font-size:11px">Логическое_значение1:</div>
<div class="a t dlg" style="left:466px;top:594px;font-size:11.52px">логическое_значение1;логическое_значение2;... от 1 до 255</div>
<div class="a t dlg" style="left:466px;top:607px;font-size:11.53px">проверяемых условий, которые могут принимать значение ИСТИНА</div>
<div class="a t dlg" style="left:466px;top:620px;">либо ЛОЖЬ.</div>
<div class="a " style="left:258px;top:642px;width:589px;height:1px;background:#dcdcdc"></div>
<div class="a t dlg" style="left:258px;top:657px;">Значение:</div>
<div class="a t dlg" style="left:258px;top:685px;color:#0066cc;text-decoration:underline;font-size:11.7px">Справка по этой функции</div>
<div class="a " style="left:688px;top:679px;width:74px;height:22px;background:#e1e1e1;border:2px solid #0078d7"></div>
<div class="a t dlg" style="left:688px;top:685px;width:74px;text-align:center">ОК</div>
<div class="a " style="left:772px;top:679px;width:74px;height:22px;background:#e1e1e1;border:1px solid #adadad"></div>
<div class="a t dlg" style="left:772px;top:685px;width:74px;text-align:center">Отмена</div>
<div class="a " style="left:1px;top:64px;width:1072px;height:1px;background:#fff"></div>
<div class="a " style="left:1px;top:64px;width:1px;height:650px;background:#fff"></div>
<div class="a " style="left:1072px;top:64px;width:1px;height:650px;background:#fff"></div>
<div class="a " style="left:1px;top:713px;width:1072px;height:1px;background:#fff"></div>
<div class="a " style="left:0px;top:63px;width:1074px;height:1px;background:#016a3b"></div>
<div class="a " style="left:0px;top:0px;width:1px;height:715px;background:#017340"></div>
<div class="a " style="left:1073px;top:0px;width:1px;height:715px;background:#017340"></div>
<div class="a " style="left:0px;top:714px;width:1074px;height:1px;background:#017340"></div>
</body></html>
